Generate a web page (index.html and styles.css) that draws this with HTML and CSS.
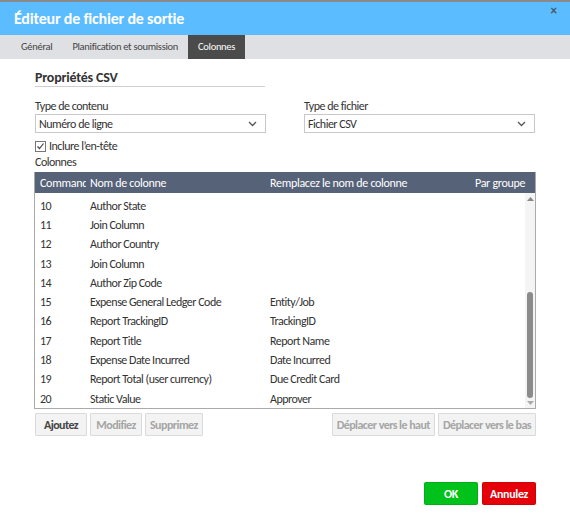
FILE: index.html
```html
<!DOCTYPE html>
<html lang="fr">
<head>
<meta charset="utf-8">
<link rel="stylesheet" href="styles.css">
</head>
<body>
<div class="dialog">
  <div class="titlebar">
    <h1 class="title">Éditeur de fichier de sortie</h1>
    <span class="close">×</span>
  </div>
  <div class="tabs">
    <span class="tab">Général</span>
    <span class="tab">Planification et soumission</span>
    <span class="tab active">Colonnes</span>
  </div>
  <div class="content">
    <div class="section-title">Propriétés CSV</div>
    <div class="fields">
      <div class="field">
        <label class="label">Type de contenu</label>
        <div class="select"><span>Numéro de ligne</span><svg class="chev" width="9" height="6" viewBox="0 0 9 6"><path d="M1 1l3.5 3.5L8 1" fill="none" stroke="#555" stroke-width="1.3"/></svg></div>
      </div>
      <div class="field">
        <label class="label">Type de fichier</label>
        <div class="select"><span>Fichier CSV</span><svg class="chev" width="9" height="6" viewBox="0 0 9 6"><path d="M1 1l3.5 3.5L8 1" fill="none" stroke="#555" stroke-width="1.3"/></svg></div>
      </div>
    </div>
    <div class="check-row">
      <span class="checkbox"><svg width="9" height="9" viewBox="0 0 9 9"><path d="M1.5 4.5l2 2 4-5" fill="none" stroke="#444" stroke-width="1.2"/></svg></span>
      <span>Inclure l’en-tête</span>
    </div>
    <div class="label cols-label">Colonnes</div>
    <div class="table">
      <div class="thead">
        <span class="c1">Commande</span>
        <span class="c2">Nom de colonne</span>
        <span class="c3">Remplacez le nom de colonne</span>
        <span class="c4">Par groupe</span>
      </div>
      <div class="tbody">
        <div class="rows">
          <div class="row"><span class="c1">10</span><span class="c2">Author State</span><span class="c3"></span></div>
          <div class="row"><span class="c1">11</span><span class="c2">Join Column</span><span class="c3"></span></div>
          <div class="row"><span class="c1">12</span><span class="c2">Author Country</span><span class="c3"></span></div>
          <div class="row"><span class="c1">13</span><span class="c2">Join Column</span><span class="c3"></span></div>
          <div class="row"><span class="c1">14</span><span class="c2">Author Zip Code</span><span class="c3"></span></div>
          <div class="row"><span class="c1">15</span><span class="c2">Expense General Ledger Code</span><span class="c3">Entity/Job</span></div>
          <div class="row"><span class="c1">16</span><span class="c2">Report TrackingID</span><span class="c3">TrackingID</span></div>
          <div class="row"><span class="c1">17</span><span class="c2">Report Title</span><span class="c3">Report Name</span></div>
          <div class="row"><span class="c1">18</span><span class="c2">Expense Date Incurred</span><span class="c3">Date Incurred</span></div>
          <div class="row"><span class="c1">19</span><span class="c2">Report Total (user currency)</span><span class="c3">Due Credit Card</span></div>
          <div class="row"><span class="c1">20</span><span class="c2">Static Value</span><span class="c3">Approver</span></div>
        </div>
        <div class="scrollbar">
          <svg class="arrow" width="7" height="4" viewBox="0 0 7 4"><path d="M0 4L3.5 0L7 4z" fill="#888"/></svg>
          <div class="track"><div class="thumb"></div></div>
          <svg class="arrow" width="7" height="4" viewBox="0 0 7 4"><path d="M0 0L3.5 4L7 0z" fill="#aaa"/></svg>
        </div>
      </div>
    </div>
    <div class="toolbar">
      <div class="btn-group">
        <button class="btn">Ajoutez</button>
        <button class="btn disabled">Modifiez</button>
        <button class="btn disabled">Supprimez</button>
      </div>
      <div class="btn-group">
        <button class="btn disabled">Déplacer vers le haut</button>
        <button class="btn disabled">Déplacer vers le bas</button>
      </div>
    </div>
    <div class="footer">
      <button class="action ok">OK</button>
      <button class="action cancel">Annulez</button>
    </div>
  </div>
</div>
</body>
</html>
```

FILE: styles.css
```css
* { box-sizing: border-box; }
html, body { margin: 0; padding: 0; background: #fff; }
body {
  font-family: Carlito, Calibri, Lato, "Liberation Sans", sans-serif;
  font-size: 12px;
  letter-spacing: -0.5px;
  color: #333;
  width: 570px;
  height: 520px;
  overflow: hidden;
}
.dialog {
  border-top: 2px solid #8a8a8a;
}
.titlebar {
  background: #5bbcff;
  height: 33px;
  display: flex;
  justify-content: space-between;
  align-items: flex-start;
  padding: 0 14px;
}
.title {
  margin: 0;
  font-size: 16px;
  letter-spacing: -0.2px;
  font-weight: bold;
  color: #fff;
  line-height: 34px;
}
.close {
  color: #4a5666;
  font-size: 13px;
  font-weight: bold;
  line-height: 12px;
  margin-top: 3px;
  margin-right: -1px;
  letter-spacing: 0;
}
.tabs {
  background: #dfe0e3;
  height: 24px;
  display: flex;
  padding-left: 11px;
}
.tab {
  padding: 0 10px;
  line-height: 24px;
  font-size: 10.5px;
  letter-spacing: -0.3px;
  color: #444;
}
.tab.active {
  background: #4b4b4b;
  color: #fff;
}
.content {
  padding: 11px 35px 0 35px;
}
.section-title {
  font-weight: bold;
  font-size: 14px;
  letter-spacing: -0.2px;
  width: 230px;
  border-bottom: 1px solid #cfcfcf;
  line-height: 16px;
}
.fields {
  display: flex;
  justify-content: space-between;
  margin-top: 12px;
}
.field {
  width: 231px;
}
.label {
  display: block;
  line-height: 15px;
}
.select {
  height: 19px;
  border: 1px solid #c8c8c8;
  display: flex;
  align-items: center;
  justify-content: space-between;
  padding: 0 8px 0 3px;
  background: #fff;
}
.chev { display: block; }
.check-row {
  display: flex;
  align-items: center;
  gap: 3px;
  margin-top: 6px;
  line-height: 15px;
}
.checkbox {
  width: 11px;
  height: 11px;
  border: 1px solid #777;
  display: flex;
  align-items: center;
  justify-content: center;
  background: #fff;
}
.checkbox svg { display: block; }
.cols-label { margin-top: 1px; }
.table {
  margin-top: 2px;
  margin-left: -1px;
  width: 502px;
  border: 1px solid #aaa;
  border-top: none;
}
.thead {
  background: #566278;
  color: #fff;
  height: 21px;
  letter-spacing: -0.3px;
  display: grid;
  grid-template-columns: 51px 180px 205px 1fr;
  align-items: center;
}
.thead span, .row span {
  white-space: nowrap;
  overflow: hidden;
  padding-left: 4px;
}
.thead .c1, .row .c1 { padding-left: 5px; }
.tbody {
  display: flex;
  height: 215px;
}
.rows {
  flex: 1;
  padding-top: 3px;
}
.row {
  display: grid;
  grid-template-columns: 51px 180px 205px;
  height: 19.3px;
  align-items: center;
}
.scrollbar {
  width: 10px;
  background: #f4f4f4;
  display: flex;
  flex-direction: column;
  align-items: center;
  padding: 4px 0 3px;
}
.arrow { display: block; flex: none; }
.track {
  flex: 1;
  width: 100%;
  display: flex;
  flex-direction: column;
  align-items: center;
  justify-content: flex-end;
  padding-bottom: 3px;
}
.thumb {
  width: 6px;
  height: 106px;
  background: #8b8b8b;
  border-radius: 3px;
}
.toolbar {
  display: flex;
  justify-content: space-between;
  margin-top: 4px;
  width: 501px;
}
.btn-group {
  display: flex;
  gap: 3px;
}
.btn {
  font-family: inherit;
  font-size: 12px;
  letter-spacing: -0.55px;
  font-weight: bold;
  height: 23px;
  min-width: 52px;
  padding: 0 4px;
  background: #f3f3f3;
  border: 1px solid #dadada;
  color: #444;
  border-radius: 1px;
}
.btn.disabled { color: #a5a5a5; }
.footer {
  display: flex;
  justify-content: flex-end;
  gap: 4px;
  margin-top: 46px;
  width: 501px;
}
.action {
  font-family: inherit;
  font-size: 12px;
  letter-spacing: -0.3px;
  font-weight: bold;
  color: #fff;
  width: 54px;
  height: 23px;
  border: 1px solid rgba(0,0,0,0.1);
  border-radius: 2px;
}
.ok { background: #00c21a; }
.cancel { background: #e60009; }
```
